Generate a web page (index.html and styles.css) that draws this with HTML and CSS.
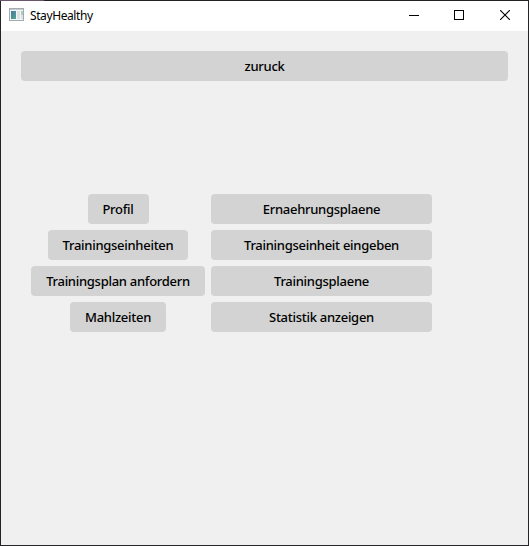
FILE: index.html
```html
<!DOCTYPE html>
<html lang="de">
<head>
<meta charset="utf-8">
<title>StayHealthy</title>
<link rel="stylesheet" href="styles.css">
</head>
<body>
<div class="window">
  <header class="titlebar">
    <svg class="app-icon" width="16" height="14" viewBox="0 0 16 14">
      <defs>
        <linearGradient id="pane" x1="0" y1="0" x2="1" y2="1">
          <stop offset="0" stop-color="#4776a8"/>
          <stop offset="1" stop-color="#55a888"/>
        </linearGradient>
      </defs>
      <rect x=".5" y=".5" width="14" height="12" fill="#f4f5f6" stroke="#a3aab0"/>
      <path d="M1 1.5h13" stroke="#c5ccd2"/>
      <rect x="2" y="3" width="5" height="8" fill="url(#pane)"/>
      <rect x="8" y="3" width="3" height="8" fill="#dfe2e5"/>
      <rect x="12" y="3" width="2" height="4" fill="#a9cfb8"/>
      <rect x="12" y="7" width="2" height="4" fill="#d8e2e6"/>
    </svg>
    <span class="title">StayHealthy</span>
    <div class="controls">
      <svg class="control minimize" viewBox="0 0 10 10" shape-rendering="crispEdges"><path d="M0 5.5h10" stroke="#000"/></svg>
      <svg class="control" viewBox="0 0 10 10" shape-rendering="crispEdges"><path d="M.5.5h9v9h-9z" fill="none" stroke="#000"/></svg>
      <svg class="control" viewBox="0 0 10 10"><path d="M0 0l10 10M10 0L0 10" stroke="#000" stroke-width="1.1"/></svg>
    </div>
  </header>
  <main class="content">
    <button class="button back">zuruck</button>
    <div class="menu">
      <button class="button profile">Profil</button>
      <button class="button wide">Ernaehrungsplaene</button>
      <button class="button units">Trainingseinheiten</button>
      <button class="button wide">Trainingseinheit eingeben</button>
      <button class="button request">Trainingsplan anfordern</button>
      <button class="button wide">Trainingsplaene</button>
      <button class="button meals">Mahlzeiten</button>
      <button class="button wide">Statistik anzeigen</button>
    </div>
  </main>
</div>
</body>
</html>
```
FILE: styles.css
```css
* {
  box-sizing: border-box;
}

body {
  margin: 0;
  font-family: "Noto Sans", "Open Sans", sans-serif;
  color: #000;
}

.window {
  display: flex;
  flex-direction: column;
  width: 529px;
  height: 546px;
  padding: 1px;
  background: linear-gradient(#69546c, #69546c) 0 0 / 44px 1px no-repeat #242326;
  overflow: hidden;
}

.titlebar {
  display: flex;
  align-items: center;
  height: 30px;
  padding: 0 18px 0 8px;
  background: #fff;
}

.app-icon {
  margin-top: -2px;
}

.title {
  margin-left: 5px;
  font-size: 12px;
  line-height: 16px;
  letter-spacing: -0.4px;
}

.controls {
  display: flex;
  gap: 36px;
  margin: -2px 0 0 auto;
}

.control {
  width: 10px;
  height: 10px;
}

.minimize {
  margin-right: -1px;
}

.content {
  display: flex;
  flex: 1;
  flex-direction: column;
  padding: 20px;
  background: #f0f0f0;
}

.button {
  height: 30px;
  padding: 0;
  border: 0;
  border-radius: 4px;
  background: #d3d3d3;
  color: #000;
  font-family: inherit;
  font-size: 13px;
  font-weight: 500;
  line-height: 30px;
  letter-spacing: -0.28px;
  white-space: nowrap;
}

.menu {
  display: grid;
  grid-template-columns: 174px 221px;
  gap: 6px;
  justify-items: center;
  margin: 113px 0 0 10px;
}

.wide {
  width: 221px;
}

.profile {
  width: 61px;
}

.units {
  width: 140px;
}

.request {
  width: 174px;
}

.meals {
  width: 96px;
}
```
